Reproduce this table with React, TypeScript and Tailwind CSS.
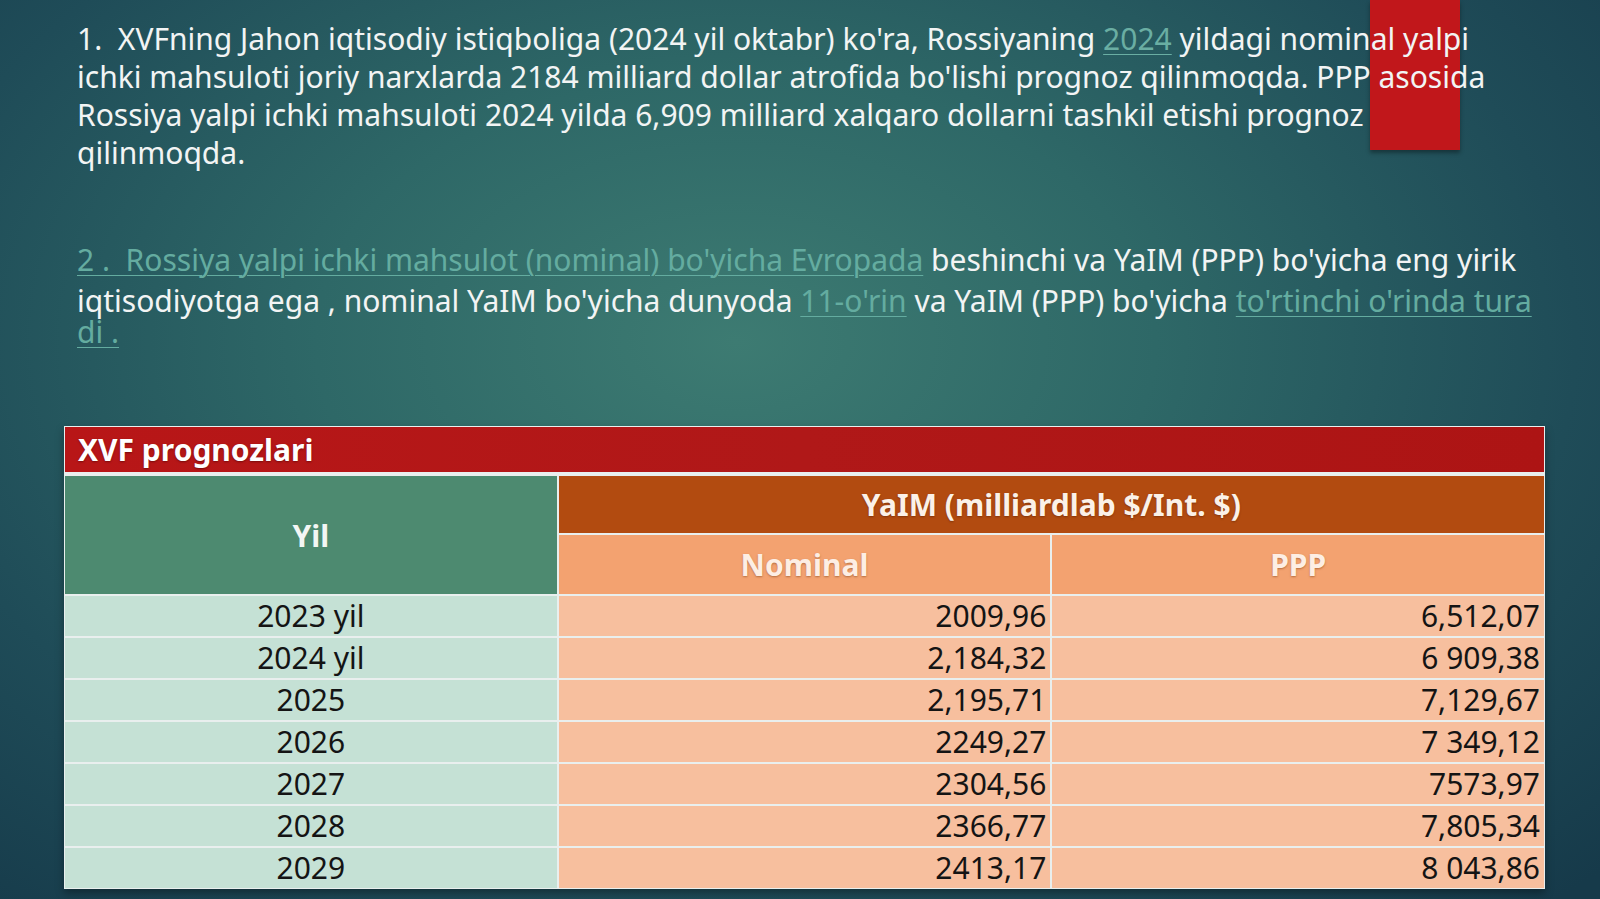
import React from "react";

const rows: [string, string, string][] = [
  ["2023 yil", "2009,96", "6,512,07"],
  ["2024 yil", "2,184,32", "6 909,38"],
  ["2025", "2,195,71", "7,129,67"],
  ["2026", "2249,27", "7 349,12"],
  ["2027", "2304,56", "7573,97"],
  ["2028", "2366,77", "7,805,34"],
  ["2029", "2413,17", "8 043,86"],
];

export default function App() {
  return (
    <div className="relative w-[1600px] h-[899px] overflow-hidden bg-[radial-gradient(ellipse_75%_85%_at_46%_38%,#3d7b72_0%,#2e6867_35%,#1f4c58_70%,#163a4a_100%)] font-['Noto_Sans','Open_Sans',sans-serif] text-[#f2f4f4]">
      {/* decorative red tab */}
      <div className="absolute left-[1370px] top-0 w-[90px] h-[150px] bg-[#c1171b] shadow-[0_3px_4px_rgba(0,0,0,0.35)]" />

      <div className="relative flex flex-col pl-[77px]">
        <div className="pt-[20px] text-[30px] leading-[38px] whitespace-nowrap">
          <div>
            1.&nbsp; XVFning Jahon iqtisodiy istiqboliga (2024 yil oktabr) ko'ra, Rossiyaning{" "}
            <span className="text-[#6aaea3] underline decoration-1 underline-offset-4">2024</span>{" "}
            yildagi nominal yalpi
          </div>
          <div>ichki mahsuloti joriy narxlarda 2184 milliard dollar atrofida bo'lishi prognoz qilinmoqda. PPP asosida</div>
          <div>Rossiya yalpi ichki mahsuloti 2024 yilda 6,909 milliard xalqaro dollarni tashkil etishi prognoz</div>
          <div>qilinmoqda.</div>
        </div>

        <div className="mt-[67px] text-[30px] leading-[41px] whitespace-nowrap">
          <div>
            <span className="text-[#64aca0] underline decoration-1 underline-offset-4">
              2 .&nbsp; Rossiya yalpi ichki mahsulot (nominal) bo'yicha Evropada
            </span>{" "}
            beshinchi va YaIM (PPP) bo'yicha eng yirik
          </div>
          <div>
            iqtisodiyotga ega , nominal YaIM bo'yicha dunyoda{" "}
            <span className="text-[#64aca0] underline decoration-1 underline-offset-4">11-o'rin</span>{" "}
            va YaIM (PPP) bo'yicha{" "}
            <span className="text-[#64aca0] underline decoration-1 underline-offset-4">to'rtinchi o'rinda tura</span>
          </div>
          <div className="mt-[-10px]">
            <span className="text-[#64aca0] underline decoration-1 underline-offset-4">di .</span>
          </div>
        </div>
      </div>

      {/* table */}
      <div className="absolute left-[64px] top-[426px] w-[1481px] shadow-[0_4px_8px_rgba(0,0,0,0.35)]">
        <div className="border border-[#e9efee] bg-[#e9efee]">
          <div className="h-[45px] bg-[linear-gradient(90deg,#b81617,#b01818_50%,#ad1414)] flex items-center pl-[13px] text-[30px] font-bold text-white [text-shadow:0_1px_2px_rgba(60,0,0,0.5)]">
            XVF prognozlari
          </div>
          <div className="mt-[4px] grid grid-cols-3 gap-x-[2px] gap-y-[2px]">
            <div className="row-span-2 bg-[#4d8a70] flex items-center justify-center text-[30px] font-bold text-[#f3f6f4]">
              Yil
            </div>
            <div className="col-span-2 h-[57px] bg-[#b24b10] flex items-center justify-center text-[30px] font-bold text-[#fbf1e8] [text-shadow:0_1px_2px_rgba(60,20,0,0.4)]">
              YaIM (milliardlab $/Int. $)
            </div>
            <div className="h-[59px] bg-[#f3a270] flex items-center justify-center text-[30px] font-bold text-[#fdeee4] [text-shadow:0_1px_2px_rgba(120,60,20,0.5)]">
              Nominal
            </div>
            <div className="h-[59px] bg-[#f3a270] flex items-center justify-center text-[30px] font-bold text-[#fdeee4] [text-shadow:0_1px_2px_rgba(120,60,20,0.5)]">
              PPP
            </div>
            {rows.map((r) => (
              <React.Fragment key={r[0]}>
                <div className="h-[40px] bg-[#c5e1d5] flex items-center justify-center text-[30px] leading-none text-[#141414]">
                  {r[0]}
                </div>
                <div className="h-[40px] bg-[#f7bf9e] flex items-center justify-end pr-[4px] text-[30px] leading-none text-[#141414]">
                  {r[1]}
                </div>
                <div className="h-[40px] bg-[#f7bf9e] flex items-center justify-end pr-[4px] text-[30px] leading-none text-[#141414]">
                  {r[2]}
                </div>
              </React.Fragment>
            ))}
          </div>
        </div>
      </div>
    </div>
  );
}
